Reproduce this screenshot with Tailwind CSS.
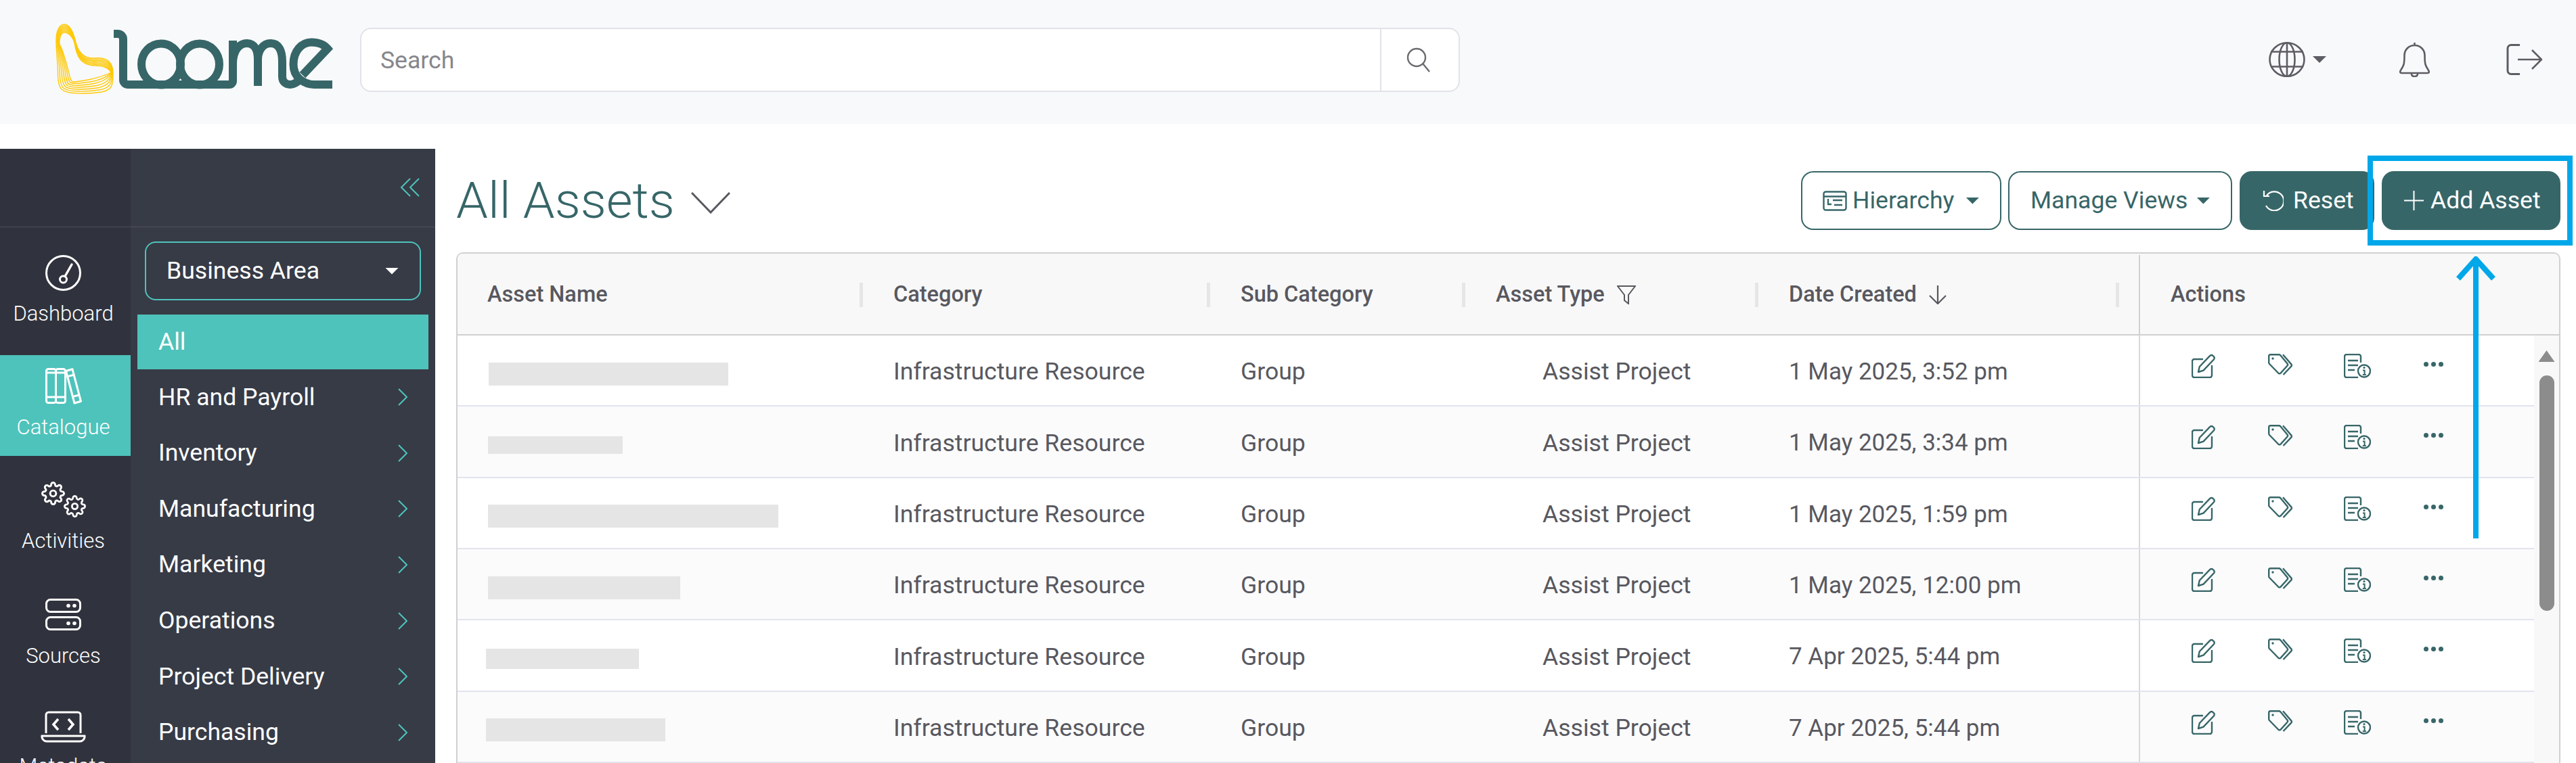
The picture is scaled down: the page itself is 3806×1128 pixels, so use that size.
<!DOCTYPE html>
<html lang="en">
  <head>
    <meta charset="UTF-8" />
    <title>Loome - All Assets</title>
    <script src="https://cdn.jsdelivr.net/npm/@tailwindcss/browser@4"></script>
  </head>
  <body class="w-[3806px] h-[1128px] overflow-hidden bg-white font-['Roboto',sans-serif] text-[35.6px] text-[#58585f]">
    <svg class="hidden">
      <symbol id="i-edit" viewBox="0 0 36 36">
        <path d="M16 8H4a3 3 0 0 0-3 3v21a3 3 0 0 0 3 3h23a3 3 0 0 0 3-3V18" fill="none" stroke="currentColor" stroke-width="2.4" stroke-linecap="round" />
        <path d="M10 27l1.8-8L27 3.2a3 3 0 0 1 4.6-.2l1.2 1.2a3 3 0 0 1 0 4.3L17.5 24.6z" fill="none" stroke="currentColor" stroke-width="2.4" stroke-linejoin="round" />
      </symbol>
      <symbol id="i-tags" viewBox="0 0 36 32">
        <path d="M1.2 3.5a2.3 2.3 0 0 1 2.3-2.3h12.6a3 3 0 0 1 2.2 1l10.2 12.4a2.4 2.4 0 0 1-.1 3.2L18.6 28.6a2.4 2.4 0 0 1-3.5-.1L2 15a3 3 0 0 1-.8-2z" fill="none" stroke="currentColor" stroke-width="2.4" />
        <path d="M22 1.2l12.2 14.2a2.4 2.4 0 0 1 0 3.2L22.5 31" fill="none" stroke="currentColor" stroke-width="2.4" />
        <circle cx="7" cy="7" r="1.7" fill="currentColor" />
      </symbol>
      <symbol id="i-docinfo" viewBox="0 0 40 36">
        <path d="M25 13V4a3 3 0 0 0-3-3H4a3 3 0 0 0-3 3v28a3 3 0 0 0 3 3h17" fill="none" stroke="currentColor" stroke-width="2.4" />
        <path d="M6 10h15M6 17h15M6 24h10" stroke="currentColor" stroke-width="2.4" />
        <circle cx="30" cy="25.5" r="9" fill="none" stroke="currentColor" stroke-width="2.4" />
        <circle cx="30" cy="20.5" r="1.6" fill="currentColor" />
        <path d="M28 24.5h2.6v6.5M27.8 31h5" fill="none" stroke="currentColor" stroke-width="2" />
      </symbol>
      <symbol id="i-gear" viewBox="0 0 24 24">
        <circle cx="12" cy="12" r="3" fill="none" stroke="currentColor" stroke-width="2" />
        <path fill="none" stroke="currentColor" stroke-width="2" stroke-linejoin="round" d="M19.4 15a1.65 1.65 0 0 0 .33 1.82l.06.06a2 2 0 0 1 0 2.83 2 2 0 0 1-2.83 0l-.06-.06a1.65 1.65 0 0 0-1.82-.33 1.65 1.65 0 0 0-1 1.51V21a2 2 0 0 1-2 2 2 2 0 0 1-2-2v-.09A1.65 1.65 0 0 0 9 19.4a1.65 1.65 0 0 0-1.82.33l-.06.06a2 2 0 0 1-2.83 0 2 2 0 0 1 0-2.83l.06-.06a1.65 1.65 0 0 0 .33-1.82 1.65 1.65 0 0 0-1.51-1H3a2 2 0 0 1-2-2 2 2 0 0 1 2-2h.09A1.65 1.65 0 0 0 4.6 9a1.65 1.65 0 0 0-.33-1.82l-.06-.06a2 2 0 0 1 0-2.83 2 2 0 0 1 2.83 0l.06.06a1.65 1.65 0 0 0 1.82.33H9a1.65 1.65 0 0 0 1-1.51V3a2 2 0 0 1 2-2 2 2 0 0 1 2 2v.09a1.65 1.65 0 0 0 1 1.51 1.65 1.65 0 0 0 1.82-.33l.06-.06a2 2 0 0 1 2.83 0 2 2 0 0 1 0 2.83l-.06.06a1.65 1.65 0 0 0-.33 1.82V9a1.65 1.65 0 0 0 1.51 1H21a2 2 0 0 1 2 2 2 2 0 0 1-2 2h-.09a1.65 1.65 0 0 0-1.51 1z" />
      </symbol>
      <symbol id="i-chev" viewBox="0 0 14 26">
        <path d="M1 1l12 12L1 25" fill="none" stroke="#4ec3bb" stroke-width="2" />
      </symbol>
    </svg>

    <!-- top bar -->
    <header class="h-[183px] bg-[#f8f9fb] flex items-start">
      <svg class="w-[520px] h-[183px] shrink-0" viewBox="0 0 520 183" role="img" aria-label="Loome logo">
        <g id="loop" fill="none" stroke="#ffc907" stroke-width="1.4"></g>
        <g fill="none" stroke="#376668" stroke-width="12">
          <path d="M168 50h6a8 8 0 0 1 8 8v60a7 7 0 0 0 7 7h150a5 5 0 0 0 5-5V60" />
          <ellipse cx="238" cy="95" rx="29" ry="30.5" />
          <ellipse cx="295" cy="95" rx="29" ry="30.5" />
          <path d="M344 95c0-24 12-31 21-31 12 0 16 12 16 24v39" />
          <path d="M381 88c0-14 8-24 19-24 12 0 17 11 17 27v22c0 8 5 12 12 12 6 0 11-4 16-9" />
          <path d="M447 111L484 72C478 65 470 62.500 460 62.500 446 62.500 433.500 75 433.500 95 433.500 104 437 112 443 117 449 122 455 125 464 125H491" />
        </g>
      </svg>
      <div class="mt-[41px] ml-[12px] w-[1625px] h-[95px] flex bg-white border-2 border-[#e1e3e9] rounded-[16px]">
        <div class="w-[1507px] pl-[28px] pt-[2px] flex items-center text-[#86868c] border-r-2 border-[#e1e3e9]">Search</div>
        <div class="flex-1 flex items-center justify-center">
          <svg class="w-[36px] h-[38px] ml-[-4px]" viewBox="0 0 36 38" fill="none" stroke="#6b6b70" stroke-width="2.4">
            <circle cx="15" cy="15" r="13" />
            <path d="M24.5 24.5L34 36" />
          </svg>
        </div>
      </div>
      <div class="ml-[1195px] mt-[62px] flex items-start">
        <svg class="w-[54px] h-[52px]" viewBox="0 0 54 52" fill="none" stroke="#5d5d63" stroke-width="2.6">
          <ellipse cx="27" cy="26" rx="25.5" ry="24.7" />
          <ellipse cx="27" cy="26" rx="11.5" ry="24.7" />
          <path d="M3 14.5h48M3 36.5h48M27 1v50" />
        </svg>
        <i class="block mt-[21px] ml-[11px] w-[20px] h-[10px] bg-[#5d5d63] [clip-path:polygon(0_0,100%_0,50%_100%)]"></i>
        <svg class="ml-[107px] w-[47px] h-[52px]" viewBox="0 0 47 52" fill="none" stroke="#5d5d63" stroke-width="2.6">
          <path d="M23.5 5c-9 0-15 7-15 15 0 13-1 15-5 21-1.800 2.500-2 5 1 5h38c3 0 2.800-2.500 1-5-4-6-5-8-5-21 0-8-6-15-15-15zM23.5 1v4" />
          <path d="M19 47c0 3 2 4 4.500 4s4.500-1 4.500-4" />
        </svg>
        <svg class="ml-[112px] mt-[3px] w-[54px] h-[46px]" viewBox="0 0 54 46" fill="none" stroke="#5d5d63" stroke-width="2.6" stroke-linejoin="round">
          <path d="M20 1.500H7a5 5 0 0 0-5 5v33a5 5 0 0 0 5 5h13" stroke-width="3" />
          <path d="M17 23h35M38 9l14 14-14 14" />
        </svg>
      </div>
    </header>

    <main class="mt-[37px] flex h-[908px]">
      <!-- icon rail -->
      <nav class="w-[193px] shrink-0 bg-[#30333d] text-[31px] font-light text-white">
        <div class="h-[117px] border-b-[3px] border-[#3b3e49]"></div>
        <div class="flex flex-col gap-[19px] mt-[20px]">
          <a class="h-[149px] flex flex-col items-center pt-[20px] pr-[6px]">
            <svg class="w-[53px] h-[53px]" viewBox="0 0 53 53" fill="none" stroke="#fff" stroke-width="3">
              <circle cx="26.500" cy="26.500" r="25" />
              <circle cx="26.500" cy="36" r="5" />
              <path d="M29 31.500L39 14" stroke-linecap="round" stroke-width="3.400" />
            </svg>
            <span class="mt-[16px] leading-[36px]">Dashboard</span>
          </a>
          <a class="h-[149px] flex flex-col items-center pt-[19px] pr-[6px] bg-[#4ec3bb]">
            <svg class="w-[54px] h-[54px]" viewBox="0 0 54 54" fill="none" stroke="#fff" stroke-width="3" stroke-linejoin="round">
              <rect x="1.500" y="1.500" width="14" height="50" rx="3" />
              <rect x="15.500" y="1.500" width="14" height="50" rx="3" />
              <path d="M1.500 7h28M1.500 43h28" />
              <path d="M30.500 4.500l9.500-2.700 12.500 47.500-9.500 2.700z" />
              <path d="M32.500 12.600l10-2.600M39.500 42.600l10.200-2.600" />
            </svg>
            <span class="mt-[16px] leading-[36px]">Catalogue</span>
          </a>
          <a class="h-[149px] flex flex-col items-center pt-[19px] pr-[6px]">
            <div class="w-[66px] h-[53px] flex items-start text-white">
              <svg class="w-[35px] h-[35px]"><use href="#i-gear" /></svg>
              <svg class="w-[33px] h-[33px] mt-[20px] ml-[-2px]"><use href="#i-gear" /></svg>
            </div>
            <span class="mt-[17px] leading-[36px]">Activities</span>
          </a>
          <a class="h-[149px] flex flex-col items-center pt-[24px] pr-[6px]">
            <svg class="w-[53px] h-[47px]" viewBox="0 0 53 47" fill="none" stroke="#fff" stroke-width="3">
              <rect x="1.500" y="1.500" width="50" height="18" rx="6" />
              <rect x="1.500" y="27.500" width="50" height="18" rx="6" />
              <g fill="#fff" stroke="none">
                <circle cx="34" cy="10.500" r="2.800" /><circle cx="43" cy="10.500" r="2.800" />
                <circle cx="34" cy="36.500" r="2.800" /><circle cx="43" cy="36.500" r="2.800" />
              </g>
            </svg>
            <span class="mt-[20px] leading-[36px]">Sources</span>
          </a>
          <a class="h-[149px] flex flex-col items-center pt-[22px] pr-[6px]">
            <svg class="w-[67px] h-[47px]" viewBox="0 0 67 47" fill="none" stroke="#fff" stroke-width="3">
              <path d="M8 33V6a4 4 0 0 1 4-4h43a4 4 0 0 1 4 4v27" />
              <path d="M2 37h63a7 7 0 0 1-7 8H9a7 7 0 0 1-7-8z" />
              <path d="M26 12l-7 8 7 8M41 12l7 8-7 8" stroke-width="3.600" />
            </svg>
            <span class="mt-[17px] leading-[36px]">Metadata</span>
          </a>
        </div>
      </nav>

      <!-- business area panel -->
      <aside class="w-[450px] shrink-0 bg-[#373b46] text-white">
        <div class="h-[117px] border-b-[3px] border-[#41444f] flex justify-end pr-[23px] pt-[43px]">
          <svg class="w-[29px] h-[28px]" viewBox="0 0 29 28" fill="none" stroke="#4ec3bb" stroke-width="2">
            <path d="M15 1L2 14l13 13M28 1L15 14l13 13" />
          </svg>
        </div>
        <div class="mt-[20px] ml-[21px] w-[408px] h-[87px] border-2 border-[#4ec3bb] rounded-[16px] flex items-center justify-between pl-[30px] pr-[31px]">
          <span>Business Area</span>
          <i class="block w-[20px] h-[10px] bg-white [clip-path:polygon(0_0,100%_0,50%_100%)]"></i>
        </div>
        <ul class="mt-[21px] ml-[10px] w-[430px]">
          <li class="h-[81px] bg-[#4ec3bb] flex items-center pl-[31px]">All</li>
          <li class="h-[82.6px] flex items-center justify-between pl-[31px] pr-[31px]">HR and Payroll <svg class="w-[14px] h-[26px]"><use href="#i-chev" /></svg></li>
          <li class="h-[82.6px] flex items-center justify-between pl-[31px] pr-[31px]">Inventory <svg class="w-[14px] h-[26px]"><use href="#i-chev" /></svg></li>
          <li class="h-[82.6px] flex items-center justify-between pl-[31px] pr-[31px]">Manufacturing <svg class="w-[14px] h-[26px]"><use href="#i-chev" /></svg></li>
          <li class="h-[82.6px] flex items-center justify-between pl-[31px] pr-[31px]">Marketing <svg class="w-[14px] h-[26px]"><use href="#i-chev" /></svg></li>
          <li class="h-[82.6px] flex items-center justify-between pl-[31px] pr-[31px]">Operations <svg class="w-[14px] h-[26px]"><use href="#i-chev" /></svg></li>
          <li class="h-[82.6px] flex items-center justify-between pl-[31px] pr-[31px]">Project Delivery <svg class="w-[14px] h-[26px]"><use href="#i-chev" /></svg></li>
          <li class="h-[82.6px] flex items-center justify-between pl-[31px] pr-[31px]">Purchasing <svg class="w-[14px] h-[26px]"><use href="#i-chev" /></svg></li>
        </ul>
      </aside>

      <section class="relative flex-1 pl-[31px] pr-[23px] pt-[33px]">
        <div class="flex items-center justify-between h-[87px]">
          <div class="flex items-center">
            <h1 class="text-[75px] font-light text-[#376668] leading-none">All Assets</h1>
            <svg class="ml-[24px] mt-[6px] w-[58px] h-[32px]" viewBox="0 0 58 32" fill="none" stroke="#58585f" stroke-width="3">
              <path d="M1 1l28 29L57 1" />
            </svg>
          </div>
          <div class="flex items-stretch h-[87px] text-[#376668]">
            <button class="w-[296px] border-2 border-[#376668] rounded-[18px] flex items-center pl-[30px]">
              <svg class="w-[36px] h-[30px]" viewBox="0 0 36 30" fill="none" stroke="#376668" stroke-width="2.400">
                <rect x="1.500" y="1.500" width="33" height="27" rx="3" />
                <path d="M1.500 8.500h33M8 12v8h5M15 14h14M17 21h12" />
              </svg>
              <span class="ml-[8px]">Hierarchy</span>
              <i class="block ml-[17px] w-[20px] h-[10px] bg-[#376668] [clip-path:polygon(0_0,100%_0,50%_100%)]"></i>
            </button>
            <button class="ml-[10px] w-[331px] border-2 border-[#376668] rounded-[18px] flex items-center pl-[31px]">
              <span>Manage Views</span>
              <i class="block ml-[13px] w-[20px] h-[10px] bg-[#376668] [clip-path:polygon(0_0,100%_0,50%_100%)]"></i>
            </button>
            <button class="ml-[11px] w-[199px] bg-[#376668] text-white rounded-[18px] flex items-center pl-[34px]">
              <svg class="w-[31px] h-[31px]" viewBox="0 0 31 31" fill="none" stroke="#fff" stroke-width="2.200">
                <path d="M6 8a14 14 0 1 1-1 15M2 1v8h8" />
              </svg>
              <span class="ml-[14px]">Reset</span>
            </button>
            <button class="ml-[11px] w-[264px] bg-[#376668] text-white rounded-[18px] flex items-center pl-[33px]">
              <svg class="w-[29px] h-[29px]" viewBox="0 0 29 29" stroke="#fff" stroke-width="2">
                <path d="M14.500 0v29M0 14.500h29" />
              </svg>
              <span class="ml-[10px]">Add Asset</span>
            </button>
          </div>
        </div>

        <div class="mt-[33px] border-2 border-b-0 border-[#d0d0d0] rounded-t-[10px] h-[800px]">
          <div class="h-[121px] pt-[2px] bg-[#f8f8f8] border-b-2 border-[#d0d0d0] rounded-t-[8px] grid grid-cols-[599px_513px_377px_433px_562px_1fr] font-medium text-[32.5px]">
            <div class="flex items-center justify-between pl-[44px]"><span>Asset Name</span><i class="block w-[5px] h-[36px] bg-[#e6e6e6]"></i></div>
            <div class="flex items-center justify-between pl-[45px]"><span>Category</span><i class="block w-[5px] h-[36px] bg-[#e6e6e6]"></i></div>
            <div class="flex items-center justify-between pl-[45px]"><span>Sub Category</span><i class="block w-[5px] h-[36px] bg-[#e6e6e6]"></i></div>
            <div class="flex items-center pl-[45px]">
              <span>Asset Type</span>
              <svg class="ml-[18px] w-[28px] h-[28px]" viewBox="0 0 28 28" fill="none" stroke="#58585f" stroke-width="2"><path d="M1 1h26L17 14v13l-6-5v-8z" /></svg>
              <i class="block ml-auto w-[5px] h-[36px] bg-[#e6e6e6]"></i>
            </div>
            <div class="flex items-center pl-[45px] pr-[29px]">
              <span>Date Created</span>
              <svg class="ml-[18px] w-[26px] h-[28px]" viewBox="0 0 26 28" fill="none" stroke="#58585f" stroke-width="2.200"><path d="M13 0v27M1 15l12 12 12-12" /></svg>
              <i class="block ml-auto w-[5px] h-[36px] bg-[#e6e6e6]"></i>
            </div>
            <div class="flex items-center pl-[45px] border-l-2 border-[#d0d0d0]">Actions</div>
          </div>
          <div class="flex">
            <div class="flex-1">
              <div class="h-[105.33px] border-b-2 border-[#e1e4ec] grid grid-cols-[599px_513px_377px_433px_562px_1fr] items-center bg-white">
                <div class="pl-[46px] pt-[10px]"><div class="w-[354px] h-[34px] bg-[#e5e5e5]"></div></div>
                <div class="pl-[45px] pt-[5px]">Infrastructure Resource</div>
                <div class="pl-[45px] pt-[5px]">Group</div>
                <div class="pl-[114px] pt-[5px]">Assist Project</div>
                <div class="pl-[45px] pt-[5px] text-[35px]">1 May 2025, 3:52 pm</div>
                <div class="self-stretch border-l-2 border-[#d8d8d8] flex items-start pl-[76px] pt-[27px] text-[#376668]">
                  <svg class="w-[36px] h-[36px]"><use href="#i-edit" /></svg>
                  <svg class="ml-[77px] w-[36px] h-[32px]"><use href="#i-tags" /></svg>
                  <svg class="ml-[76px] w-[40px] h-[36px]"><use href="#i-docinfo" /></svg>
                  <div class="ml-[78px] mt-[12px] flex gap-[4px]"><i class="block size-[7px] rounded-full bg-[#376668]"></i><i class="block size-[7px] rounded-full bg-[#376668]"></i><i class="block size-[7px] rounded-full bg-[#376668]"></i></div>
                </div>
              </div>
              <div class="h-[105.33px] border-b-2 border-[#e1e4ec] grid grid-cols-[599px_513px_377px_433px_562px_1fr] items-center bg-[#fbfbfc]">
                <div class="pl-[45px] pt-[10px]"><div class="w-[199px] h-[26px] bg-[#e5e5e5]"></div></div>
                <div class="pl-[45px] pt-[5px]">Infrastructure Resource</div>
                <div class="pl-[45px] pt-[5px]">Group</div>
                <div class="pl-[114px] pt-[5px]">Assist Project</div>
                <div class="pl-[45px] pt-[5px] text-[35px]">1 May 2025, 3:34 pm</div>
                <div class="self-stretch border-l-2 border-[#d8d8d8] flex items-start pl-[76px] pt-[27px] text-[#376668]">
                  <svg class="w-[36px] h-[36px]"><use href="#i-edit" /></svg>
                  <svg class="ml-[77px] w-[36px] h-[32px]"><use href="#i-tags" /></svg>
                  <svg class="ml-[76px] w-[40px] h-[36px]"><use href="#i-docinfo" /></svg>
                  <div class="ml-[78px] mt-[12px] flex gap-[4px]"><i class="block size-[7px] rounded-full bg-[#376668]"></i><i class="block size-[7px] rounded-full bg-[#376668]"></i><i class="block size-[7px] rounded-full bg-[#376668]"></i></div>
                </div>
              </div>
              <div class="h-[105.33px] border-b-2 border-[#e1e4ec] grid grid-cols-[599px_513px_377px_433px_562px_1fr] items-center bg-white">
                <div class="pl-[45px] pt-[10px]"><div class="w-[429px] h-[34px] bg-[#e5e5e5]"></div></div>
                <div class="pl-[45px] pt-[5px]">Infrastructure Resource</div>
                <div class="pl-[45px] pt-[5px]">Group</div>
                <div class="pl-[114px] pt-[5px]">Assist Project</div>
                <div class="pl-[45px] pt-[5px] text-[35px]">1 May 2025, 1:59 pm</div>
                <div class="self-stretch border-l-2 border-[#d8d8d8] flex items-start pl-[76px] pt-[27px] text-[#376668]">
                  <svg class="w-[36px] h-[36px]"><use href="#i-edit" /></svg>
                  <svg class="ml-[77px] w-[36px] h-[32px]"><use href="#i-tags" /></svg>
                  <svg class="ml-[76px] w-[40px] h-[36px]"><use href="#i-docinfo" /></svg>
                  <div class="ml-[78px] mt-[12px] flex gap-[4px]"><i class="block size-[7px] rounded-full bg-[#376668]"></i><i class="block size-[7px] rounded-full bg-[#376668]"></i><i class="block size-[7px] rounded-full bg-[#376668]"></i></div>
                </div>
              </div>
              <div class="h-[105.33px] border-b-2 border-[#e1e4ec] grid grid-cols-[599px_513px_377px_433px_562px_1fr] items-center bg-[#fbfbfc]">
                <div class="pl-[45px] pt-[10px]"><div class="w-[284px] h-[34px] bg-[#e5e5e5]"></div></div>
                <div class="pl-[45px] pt-[5px]">Infrastructure Resource</div>
                <div class="pl-[45px] pt-[5px]">Group</div>
                <div class="pl-[114px] pt-[5px]">Assist Project</div>
                <div class="pl-[45px] pt-[5px] text-[35px]">1 May 2025, 12:00 pm</div>
                <div class="self-stretch border-l-2 border-[#d8d8d8] flex items-start pl-[76px] pt-[27px] text-[#376668]">
                  <svg class="w-[36px] h-[36px]"><use href="#i-edit" /></svg>
                  <svg class="ml-[77px] w-[36px] h-[32px]"><use href="#i-tags" /></svg>
                  <svg class="ml-[76px] w-[40px] h-[36px]"><use href="#i-docinfo" /></svg>
                  <div class="ml-[78px] mt-[12px] flex gap-[4px]"><i class="block size-[7px] rounded-full bg-[#376668]"></i><i class="block size-[7px] rounded-full bg-[#376668]"></i><i class="block size-[7px] rounded-full bg-[#376668]"></i></div>
                </div>
              </div>
              <div class="h-[105.33px] border-b-2 border-[#e1e4ec] grid grid-cols-[599px_513px_377px_433px_562px_1fr] items-center bg-white">
                <div class="pl-[42px] pt-[10px]"><div class="w-[226px] h-[30px] bg-[#e5e5e5]"></div></div>
                <div class="pl-[45px] pt-[5px]">Infrastructure Resource</div>
                <div class="pl-[45px] pt-[5px]">Group</div>
                <div class="pl-[114px] pt-[5px]">Assist Project</div>
                <div class="pl-[45px] pt-[5px] text-[35px]">7 Apr 2025, 5:44 pm</div>
                <div class="self-stretch border-l-2 border-[#d8d8d8] flex items-start pl-[76px] pt-[27px] text-[#376668]">
                  <svg class="w-[36px] h-[36px]"><use href="#i-edit" /></svg>
                  <svg class="ml-[77px] w-[36px] h-[32px]"><use href="#i-tags" /></svg>
                  <svg class="ml-[76px] w-[40px] h-[36px]"><use href="#i-docinfo" /></svg>
                  <div class="ml-[78px] mt-[12px] flex gap-[4px]"><i class="block size-[7px] rounded-full bg-[#376668]"></i><i class="block size-[7px] rounded-full bg-[#376668]"></i><i class="block size-[7px] rounded-full bg-[#376668]"></i></div>
                </div>
              </div>
              <div class="h-[105.33px] border-b-2 border-[#e1e4ec] grid grid-cols-[599px_513px_377px_433px_562px_1fr] items-center bg-[#fbfbfc]">
                <div class="pl-[42px] pt-[10px]"><div class="w-[265px] h-[34px] bg-[#e5e5e5]"></div></div>
                <div class="pl-[45px] pt-[5px]">Infrastructure Resource</div>
                <div class="pl-[45px] pt-[5px]">Group</div>
                <div class="pl-[114px] pt-[5px]">Assist Project</div>
                <div class="pl-[45px] pt-[5px] text-[35px]">7 Apr 2025, 5:44 pm</div>
                <div class="self-stretch border-l-2 border-[#d8d8d8] flex items-start pl-[76px] pt-[27px] text-[#376668]">
                  <svg class="w-[36px] h-[36px]"><use href="#i-edit" /></svg>
                  <svg class="ml-[77px] w-[36px] h-[32px]"><use href="#i-tags" /></svg>
                  <svg class="ml-[76px] w-[40px] h-[36px]"><use href="#i-docinfo" /></svg>
                  <div class="ml-[78px] mt-[12px] flex gap-[4px]"><i class="block size-[7px] rounded-full bg-[#376668]"></i><i class="block size-[7px] rounded-full bg-[#376668]"></i><i class="block size-[7px] rounded-full bg-[#376668]"></i></div>
                </div>
              </div>
            </div>
            <div class="w-[37px] h-[632px] bg-[#f8f8f8] flex flex-col items-center pt-[22px]">
              <i class="block w-[24px] h-[17px] bg-[#8c8c8c] [clip-path:polygon(50%_0,100%_100%,0_100%)]"></i>
              <i class="block mt-[20px] w-[22px] h-[348px] rounded-full bg-[#8c8c8c]"></i>
            </div>
          </div>
        </div>

        <!-- annotation over the page -->
        <div class="absolute left-[2855px] top-[10px] w-[303px] h-[133px] border-[8px] border-[#00a7e9]"></div>
        <svg class="absolute left-[2986px] top-[159px] w-[58px] h-[417px]" viewBox="0 0 58 417" fill="none" stroke="#00a7e9" stroke-width="8">
          <path d="M29 4v413M3 33L29 4l26 29" />
        </svg>
      </section>
    </main>

    <script>
      // nested outline lines of the logo mark, blended from outer to inner curve
      var outer = [150,136, 130,139,100,140,91,132, 84,124,86,108,85,95, 84,80,83,70,83,60, 83,45,88,36,95,36, 104,36,109,50,112,63, 116,78,124,87,140,86, 158,84,167,92,167,108, 167,126,166,133,150,136];
      var inner = [135,117, 125,119,114,121,108,121, 104,121,103,112,101,105, 98,92,92,72,88,66, 87,60,89,48,95,48, 102,48,108,56,110,63, 113,84,120,97,140,97, 155,97,161,101,164,107, 158,111,146,114,135,117];
      var svg = '';
      for (var t = 0; t < 7; t++) {
        var p = outer.map(function (v, n) { return (v + (inner[n] - v) * t / 6).toFixed(1); });
        var d = 'M' + p[0] + ' ' + p[1];
        for (var i = 2; i < p.length; i += 6) d += 'C' + p.slice(i, i + 6).join(' ');
        svg += '<path d="' + d + 'Z"/>';
      }
      document.getElementById('loop').innerHTML = svg;
    </script>
  </body>
</html>
